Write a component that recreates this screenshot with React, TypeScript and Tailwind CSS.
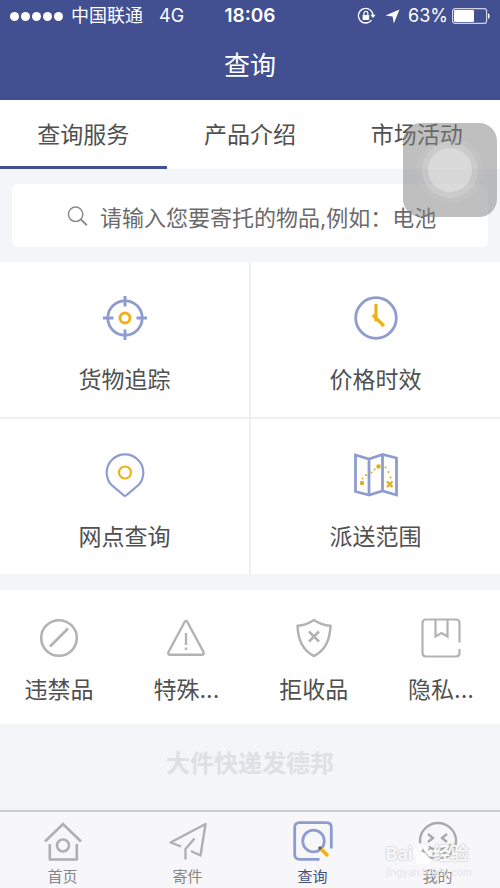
import { useState, type ReactNode } from "react";
import { clsx } from "clsx";

const TABS = ["查询服务", "产品介绍", "市场活动"];

function RotationLockIcon() {
  return (
    <svg className="h-[18px] w-5" viewBox="0 0 20 18" fill="none" aria-hidden="true">
      <path d="M14.5 13.2A7.3 7.3 0 1 1 16 8" stroke="#fff" strokeWidth="1.3" />
      <path d="M13.4 7.8h5.2L16 11z" fill="#fff" />
      <rect x="5.6" y="8" width="6.6" height="5" rx=".6" fill="#fff" />
      <path d="M7 8V6.3a1.9 1.9 0 0 1 3.8 0V8" stroke="#fff" strokeWidth="1.2" />
    </svg>
  );
}

function LocationArrowIcon() {
  return (
    <svg className="h-[15px] w-[15px]" viewBox="0 0 15 15" fill="#fff" aria-hidden="true">
      <path d="M14.5.5 8.8 14.5 7.6 7.6.5 6.6z" />
    </svg>
  );
}

function BatteryIcon() {
  return (
    <svg className="h-4 w-[38px]" viewBox="0 0 38 16" fill="none" aria-hidden="true">
      <rect x=".6" y=".6" width="34" height="14.8" rx="2.5" stroke="#cfd3ea" strokeWidth="1.2" />
      <rect x="2" y="2" width="20" height="12" rx="1" fill="#fff" />
      <path d="M36 5.2c2.2.6 2.2 5 0 5.6z" fill="#fff" />
    </svg>
  );
}

function SearchIcon() {
  return (
    <svg className="h-5 w-[21px] shrink-0" viewBox="0 0 21 20" fill="none" stroke="#8a8a8a" aria-hidden="true">
      <circle cx="8.6" cy="8.3" r="7.2" strokeWidth="1.5" />
      <path d="m13.8 13.4 6 5.8" strokeWidth="2" />
    </svg>
  );
}

function TargetIcon() {
  return (
    <svg className="size-11" viewBox="0 0 44 44" fill="none" aria-hidden="true">
      <circle cx="22" cy="22" r="17.2" stroke="#8f9cd0" strokeWidth="2.8" />
      <path d="M22 0v10.5M22 33.5V44M0 22h10.5M33.5 22H44" stroke="#8f9cd0" strokeWidth="3" />
      <circle cx="22" cy="22" r="5" stroke="#edb21a" strokeWidth="3" />
    </svg>
  );
}

function ClockIcon() {
  return (
    <svg className="size-11" viewBox="0 0 44 44" fill="none" aria-hidden="true">
      <circle cx="22" cy="22" r="20.3" stroke="#8f9cd0" strokeWidth="2.8" />
      <path d="M22 8v17.5M18.8 19 30 30" stroke="#edb21a" strokeWidth="3.2" />
    </svg>
  );
}

function PinIcon() {
  return (
    <svg className="size-11" viewBox="0 0 44 44" fill="none" aria-hidden="true">
      <path
        d="M20.5 42.2 8.3 31.8A18.3 18.3 0 1 1 35.7 31.8L23.5 42.2q-1.5 1.2-3 0z"
        stroke="#8f9cd0"
        strokeWidth="2.2"
      />
      <circle cx="22" cy="19.5" r="6" stroke="#edb21a" strokeWidth="2.2" />
    </svg>
  );
}

function MapIcon() {
  return (
    <svg className="size-11" viewBox="0 0 44 44" fill="none" aria-hidden="true">
      <path d="M1.5 2 15 6 28.5 1.5 42.5 5v37L28.5 38 15 42 1.5 38.5zM15 6v36M28.5 1.5V38" stroke="#8f9cd0" strokeWidth="2.8" />
      <circle cx="8" cy="30" r="2.2" fill="#e0ac26" />
      <circle cx="24.5" cy="13.5" r="2.2" fill="#e0ac26" />
      <path d="M8.5 25.5h.1M12 22h.1M17.5 19.5h.1M20.5 16.5h.1M31.5 14.5h.1M34.5 19h.1M36.5 24.5h.1" stroke="#e0ac26" strokeWidth="2" strokeLinecap="round" />
      <path d="m33 28.5 5.5 5.5m0-5.5L33 34" stroke="#e0ac26" strokeWidth="2.2" />
    </svg>
  );
}

function ForbiddenIcon() {
  return (
    <svg className="size-10" viewBox="0 0 40 40" fill="none" stroke="#b3b3b3" aria-hidden="true">
      <circle cx="20" cy="20" r="17.8" strokeWidth="2.6" />
      <path d="m11 28.5 18-18" strokeWidth="2.6" />
    </svg>
  );
}

function WarningIcon() {
  return (
    <svg className="size-10" viewBox="0 0 40 40" fill="none" stroke="#b3b3b3" strokeWidth="2.4" aria-hidden="true">
      <path d="M18.6 4q1.4-2.2 2.8 0L37.5 34q1 2.8-1.8 2.8H4.3q-2.8 0-1.8-2.8z" />
      <path d="M20 15v12M20 29.5V32" />
    </svg>
  );
}

function ShieldIcon() {
  return (
    <svg className="size-10" viewBox="0 0 40 40" fill="none" stroke="#b3b3b3" strokeWidth="2.5" aria-hidden="true">
      <path d="M20 2C15 5.5 9.5 7.5 3.5 7.8 4 21.5 8.5 32.5 20 38 31.5 32.5 36 21.5 36.5 7.8 30.5 7.5 25 5.5 20 2z" strokeLinejoin="round" />
      <path d="m15 13.5 10 10m0-10-10 10" />
    </svg>
  );
}

function PrivacyIcon() {
  return (
    <svg className="size-10" viewBox="0 0 40 40" fill="none" stroke="#b3b3b3" strokeWidth="2.2" aria-hidden="true">
      <path d="M38.5 24.5V5q0-3.5-3.5-3.5H5Q1.5 1.5 1.5 5v30q0 3.5 3.5 3.5h30q3.5 0 3.5-3.5v-4" />
      <path d="M14.5 2v16.5l6-3.5 6 3.5V2" />
    </svg>
  );
}

function HomeIcon() {
  return (
    <svg className="size-10" viewBox="0 0 40 40" fill="none" stroke="#b0b0b0" strokeWidth="2.6" aria-hidden="true">
      <path d="M2 20.5 20 3l18 17.5" />
      <path d="M6.8 23v15.5h27V23" strokeLinejoin="round" />
      <circle cx="20" cy="24.5" r="6" />
    </svg>
  );
}

function SendIcon() {
  return (
    <svg className="size-10" viewBox="0 0 40 40" fill="none" stroke="#b0b0b0" strokeWidth="2.4" strokeLinejoin="round" aria-hidden="true">
      <path d="M13 25.5 2.5 21.5 37.5 3l-5 31.5L23 30" />
      <path d="M26.5 17.5 17.5 28v10.5" />
    </svg>
  );
}

function QueryIcon() {
  return (
    <svg className="size-10" viewBox="0 0 40 40" fill="none" aria-hidden="true">
      <path d="M26.5 38.3h-20q-4.8 0-4.8-4.8v-27q0-4.8 4.8-4.8h27q4.8 0 4.8 4.8v21" stroke="#8f9cd0" strokeWidth="2.8" />
      <circle cx="20.5" cy="20" r="10.8" stroke="#8f9cd0" strokeWidth="2.8" />
      <path d="m26 26 3 3" stroke="#5d5a55" strokeWidth="3" />
      <path d="m28 28 7 7" stroke="#edb21a" strokeWidth="3.4" />
    </svg>
  );
}

function ProfileIcon() {
  return (
    <svg className="size-10" viewBox="0 0 40 40" fill="none" stroke="#a9a9a9" strokeWidth="2.4" aria-hidden="true">
      <circle cx="20" cy="20" r="18" />
      <path d="m10 13 5 4-5 4M29 13l-5 4 5 4" />
      <path d="M9 25q11 7.5 22 0-3 9-11 9T9 25z" />
    </svg>
  );
}

function PawIcon() {
  return (
    <svg className="h-6 w-5" viewBox="0 0 24 28" fill="currentColor" aria-hidden="true">
      <ellipse cx="3.5" cy="12" rx="3" ry="4" />
      <ellipse cx="9" cy="5.5" rx="3" ry="4.5" />
      <ellipse cx="16" cy="5.5" rx="3" ry="4.5" />
      <ellipse cx="20.5" cy="13" rx="3" ry="4" />
      <path d="M12 12c4 0 4.5 4 7 6s3 8-2 8c-3 0-3-.8-5-.8S10 26 7 26c-5 0-4.5-6-2-8s3-6 7-6z" />
    </svg>
  );
}

const SERVICES: { label: string; icon: ReactNode }[] = [
  { label: "货物追踪", icon: <TargetIcon /> },
  { label: "价格时效", icon: <ClockIcon /> },
  { label: "网点查询", icon: <PinIcon /> },
  { label: "派送范围", icon: <MapIcon /> },
];

const RULES: { label: string; icon: ReactNode }[] = [
  { label: "违禁品", icon: <ForbiddenIcon /> },
  { label: "特殊...", icon: <WarningIcon /> },
  { label: "拒收品", icon: <ShieldIcon /> },
  { label: "隐私...", icon: <PrivacyIcon /> },
];

const NAV: { label: string; icon: ReactNode; active?: boolean }[] = [
  { label: "首页", icon: <HomeIcon /> },
  { label: "寄件", icon: <SendIcon /> },
  { label: "查询", icon: <QueryIcon />, active: true },
  { label: "我的", icon: <ProfileIcon /> },
];

function StatusBar() {
  return (
    <div className="grid h-8 grid-cols-[1fr_auto_1fr] items-center px-[10px] text-lg leading-8">
      <div className="flex items-center">
        <div className="flex gap-[2px]">
          {[0, 1, 2, 3, 4].map((i) => (
            <span key={i} className="size-[9px] rounded-full bg-white" />
          ))}
        </div>
        <span className="ml-2">中国联通</span>
        <span className="ml-4">4G</span>
      </div>
      <span className="text-[19px] font-semibold">18:06</span>
      <div className="flex items-center justify-end">
        <RotationLockIcon />
        <span className="mr-2 ml-2">
          <LocationArrowIcon />
        </span>
        <span className="mr-1">63%</span>
        <BatteryIcon />
      </div>
    </div>
  );
}

export default function App() {
  const [tab, setTab] = useState(TABS[0]);

  return (
    <div className="relative flex min-h-screen flex-col bg-[#f3f5f8] font-['Inter','Noto_Sans_CJK_SC',sans-serif] text-[#505050]">
      <header className="bg-[#424f91] text-white">
        <StatusBar />
        <h1 className="h-[68px] text-center text-[26px] leading-[68px]">查询</h1>
      </header>

      <div className="grid grid-cols-3 bg-white" role="tablist">
        {TABS.map((t) => (
          <button
            key={t}
            role="tab"
            aria-selected={tab === t}
            onClick={() => setTab(t)}
            className={clsx(
              "h-[69px] border-b-[3px] pt-1 text-[23px]",
              tab === t ? "border-[#424f91]" : "border-transparent"
            )}
          >
            {t}
          </button>
        ))}
      </div>

      <label className="mx-3 my-[15px] flex h-[63px] items-center gap-3 rounded-md bg-white pl-[55px]">
        <SearchIcon />
        <input
          type="search"
          aria-label="搜索物品"
          placeholder="请输入您要寄托的物品,例如：电池"
          className="min-w-0 flex-1 pt-[6px] text-[22px] outline-none placeholder:text-[#6a6a6a]"
        />
      </label>

      {/* 查询服务 */}
      <section className="grid grid-cols-2 gap-[2px] bg-[#eeeff1]">
        {SERVICES.map((s) => (
          <button key={s.label} className="flex h-[155px] flex-col items-center gap-6 bg-white pt-[34px]">
            {s.icon}
            <span className="text-[23px] leading-8">{s.label}</span>
          </button>
        ))}
      </section>

      {/* 寄件须知 */}
      <section className="mt-4 flex h-[134px] justify-between bg-white px-6">
        {RULES.map((r) => (
          <button key={r.label} className="flex w-[70px] flex-col items-center gap-4 pt-7">
            {r.icon}
            <span className="text-[23px] leading-8 whitespace-nowrap">{r.label}</span>
          </button>
        ))}
      </section>

      <p className="py-6 text-center text-2xl leading-8 font-bold text-[#dfe0e3]">大件快递发德邦</p>

      <nav className="relative mt-auto grid h-[78px] grid-cols-4 border-t-2 border-[#cacccf] bg-[#f7f7f9]">
        {NAV.map((n) => (
          <a
            key={n.label}
            href="#"
            aria-current={n.active ? "page" : undefined}
            className={clsx(
              "flex flex-col items-center pt-[9px] text-[15px] leading-5",
              n.active ? "text-[#424f7d]" : "text-[#858585]"
            )}
          >
            {n.icon}
            <span className="mt-[6px]">{n.label}</span>
          </a>
        ))}
        {/* 水印 */}
        <div className="pointer-events-none absolute right-7 bottom-[10px] text-white/90">
          <div className="flex items-center text-lg leading-6 font-bold [text-shadow:0_0_2px_#aaaaaa]">
            Bai
            <PawIcon />
            经验
          </div>
          <div className="text-[10px] leading-3 text-[#e4e4e6]">jingyan.baidu.com</div>
        </div>
      </nav>

      {/* 悬浮辅助按钮 */}
      <button
        aria-label="辅助触控"
        className="absolute top-[123px] right-[3px] flex size-[94px] items-center justify-center rounded-[18px] bg-[#808080]/50"
      >
        <span className="flex size-[66px] items-center justify-center rounded-full bg-white/5">
          <span className="flex size-[56px] items-center justify-center rounded-full bg-white/15">
            <span className="size-11 rounded-full bg-white/30" />
          </span>
        </span>
      </button>
    </div>
  );
}
